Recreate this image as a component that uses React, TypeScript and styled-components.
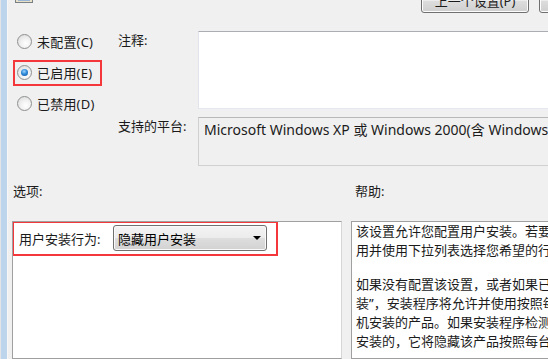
import React, { FC } from "react";
import styled, { createGlobalStyle } from "styled-components";

const GlobalStyle = createGlobalStyle`
  html, body {
    margin: 0;
    padding: 0;
    width: 548px;
    height: 359px;
    overflow: hidden;
    background: #f0f0f0;
  }
  body {
    font-family: "Noto Sans", "Noto Sans CJK SC", sans-serif;
    font-size: 13px;
    color: #1b1b1b;
  }
`;

const Dialog = styled.div`
  display: flex;
  width: 660px;
  height: 359px;
  background: #f0f0f0;
`;

const Frame = styled.div`
  flex-shrink: 0;
  width: 6px;
  border-left: 1px solid #e2e4e7;
  border-right: 1px solid #f7f7f7;
  background: #bcd4ec;
`;

const Main = styled.div`
  flex: 1;
  display: flex;
  flex-direction: column;
  padding: 0 13px 0 4px;
  min-width: 0;
`;

const TopBar = styled.div`
  display: flex;
  height: 14px;
  overflow: hidden;
  align-items: flex-end;
`;

const IconStub = styled.svg`
  align-self: flex-start;
  margin-left: 3px;
  flex-shrink: 0;
`;

const ButtonGroup = styled.div`
  display: flex;
  gap: 10px;
  margin-left: auto;
`;

const NavButton = styled.button`
  flex-shrink: 0;
  width: 108px;
  height: 24px;
  border: 1px solid #707070;
  border-radius: 3px;
  background: linear-gradient(#f2f2f2 0%, #ebebeb 50%, #dddddd 51%, #cfcfcf 100%);
  box-shadow: inset 0 0 0 1px #fcfcfc;
  font: inherit;
  color: #1b1b1b;
  padding: 0;
`;

const Upper = styled.div`
  display: flex;
  margin-top: 16px;
`;

const RadioColumn = styled.div`
  width: 106px;
  flex-shrink: 0;
  display: flex;
  flex-direction: column;
  gap: 5px;
`;

const RadioRow = styled.label<{ $marked?: boolean }>`
  display: flex;
  align-items: center;
  gap: 5px;
  width: 83px;
  height: 22px;
  margin-left: 1px;
  padding-left: 2px;
  letter-spacing: 0.2px;
  border: 2px solid ${({ $marked }) => ($marked ? "#f4373a" : "transparent")};
`;

const RadioCircle = styled.span<{ $checked?: boolean }>`
  position: relative;
  width: 13px;
  height: 13px;
  border-radius: 50%;
  border: 1px solid #8f9091;
  background: radial-gradient(circle at 60% 65%, #ffffff 0%, #f2f2f2 40%, #d6d6d6 100%);
  flex-shrink: 0;

  &::after {
    content: "";
    display: ${({ $checked }) => ($checked ? "block" : "none")};
    position: absolute;
    left: 3px;
    top: 3px;
    width: 7px;
    height: 7px;
    border-radius: 50%;
    background: radial-gradient(circle at 45% 35%, #9fd6ff 0%, #2f8ad9 45%, #0d4f96 100%);
  }
`;

const FormGrid = styled.div`
  flex: 1;
  display: grid;
  grid-template-columns: 80px 1fr;
  row-gap: 8px;
  margin-top: 2px;
`;

const FieldLabel = styled.div`
  line-height: 16px;
  padding-top: 1px;
`;

const CommentBox = styled.div`
  height: 76px;
  background: #ffffff;
  border: 1px solid #abadb3;
  border-left-color: #e2e3ea;
  border-right-color: #e2e3ea;
  border-bottom-color: #e3e9ef;
`;

const PlatformBox = styled.div`
  height: 43px;
  background: #f0f0f0;
  border: 1px solid #d0d0d0;
  border-top-color: #b8b8b8;
  padding: 4px 5px 0;
  line-height: 16px;
  font-size: 14px;
  white-space: nowrap;
  overflow: hidden;
  box-sizing: content-box;
  margin-right: -10px;
`;

const SplitGrid = styled.div`
  display: grid;
  grid-template-columns: 330px 1fr;
  column-gap: 9px;
`;

const SectionLabels = styled(SplitGrid)`
  margin-top: 17px;
  line-height: 16px;
`;

const SectionLabel = styled.div<{ $indent: number }>`
  padding-left: ${({ $indent }) => $indent}px;
`;

const Panels = styled(SplitGrid)`
  margin-top: 22px;
  height: 150px;
`;

const Panel = styled.div`
  background: #ffffff;
  border: 1px solid #a0a0a0;
  border-right-color: #d6d6d6;
  overflow: hidden;
`;

const OptionRow = styled.div`
  display: flex;
  align-items: center;
  width: 257px;
  height: 31px;
  border: 2px solid #f4373a;
  margin: -1px 0 0 -1px;
  padding-left: 5px;
  box-sizing: content-box;
`;

const OptionLabel = styled.span`
  width: 94px;
  flex-shrink: 0;
`;

const Dropdown = styled.div`
  display: flex;
  align-items: center;
  justify-content: space-between;
  width: 154px;
  height: 26px;
  box-sizing: border-box;
  border: 1px solid #707070;
  border-radius: 3px;
  background: linear-gradient(#f3f3f3 0%, #ececec 50%, #dedede 51%, #d2d2d2 100%);
  box-shadow: inset 0 0 0 1px #fafafa;
  padding: 0 5px 0 4px;
  color: #000;
`;

const Arrow = styled.span`
  width: 0;
  height: 0;
  border-left: 4px solid transparent;
  border-right: 4px solid transparent;
  border-top: 4px solid #000;
`;

const HelpBody = styled.div`
  padding: 0 4px;
`;

const HelpPara = styled.div`
  & + & {
    margin-top: 15px;
  }
`;

const HelpLine = styled.div`
  line-height: 19px;
  white-space: nowrap;
  overflow: hidden;
`;

const radios = [
  { label: "未配置(C)", checked: false },
  { label: "已启用(E)", checked: true },
  { label: "已禁用(D)", checked: false },
];

const help = [
  ["该设置允许您配置用户安装。若要配置该设置，请将其设置为“已启", "用并使用下拉列表选择您希望的行为。"],
  [
    "如果没有配置该设置，或者如果已启用该设置并选择了“允许用户安",
    "装”，安装程序将允许并使用按照每用户安装的产品而不是按照每台计算",
    "机安装的产品。如果安装程序检测到某产品是按照每用户",
    "安装的，它将隐藏该产品按照每台计算机安装的版本。",
  ],
];

const App: FC = () => {
  return (
    <>
      <GlobalStyle />
      <Dialog>
        <Frame />
        <Main>
          <TopBar>
            <IconStub width="18" height="3" viewBox="0 0 18 3">
              <rect x="0.5" y="-2" width="17" height="4.5" fill="#e8e2c8" stroke="#7b7f86" />
              <rect x="3" y="0" width="12" height="1" fill="#9ab6d6" />
            </IconStub>
            <ButtonGroup>
              <NavButton>上一个设置(P)</NavButton>
              <NavButton>下一个设置(N)</NavButton>
            </ButtonGroup>
          </TopBar>

          <Upper>
            <RadioColumn>
              {radios.map((r) => (
                <RadioRow key={r.label} $marked={r.checked}>
                  <RadioCircle $checked={r.checked} />
                  {r.label}
                </RadioRow>
              ))}
            </RadioColumn>
            <FormGrid>
              <FieldLabel>注释:</FieldLabel>
              <CommentBox />
              <FieldLabel>支持的平台:</FieldLabel>
              <PlatformBox>
                Microsoft Windows XP 或 Windows 2000(含 Windows Installer v2.0)
              </PlatformBox>
            </FormGrid>
          </Upper>

          <SectionLabels>
            <SectionLabel $indent={1}>选项:</SectionLabel>
            <SectionLabel $indent={4}>帮助:</SectionLabel>
          </SectionLabels>

          <Panels>
            <Panel>
              <OptionRow>
                <OptionLabel>用户安装行为:</OptionLabel>
                <Dropdown>
                  <span>隐藏用户安装</span>
                  <Arrow />
                </Dropdown>
              </OptionRow>
            </Panel>
            <Panel>
              <HelpBody>
                {help.map((para, i) => (
                  <HelpPara key={i}>
                    {para.map((line) => (
                      <HelpLine key={line}>{line}</HelpLine>
                    ))}
                  </HelpPara>
                ))}
              </HelpBody>
            </Panel>
          </Panels>
        </Main>
      </Dialog>
    </>
  );
};

export default App;
